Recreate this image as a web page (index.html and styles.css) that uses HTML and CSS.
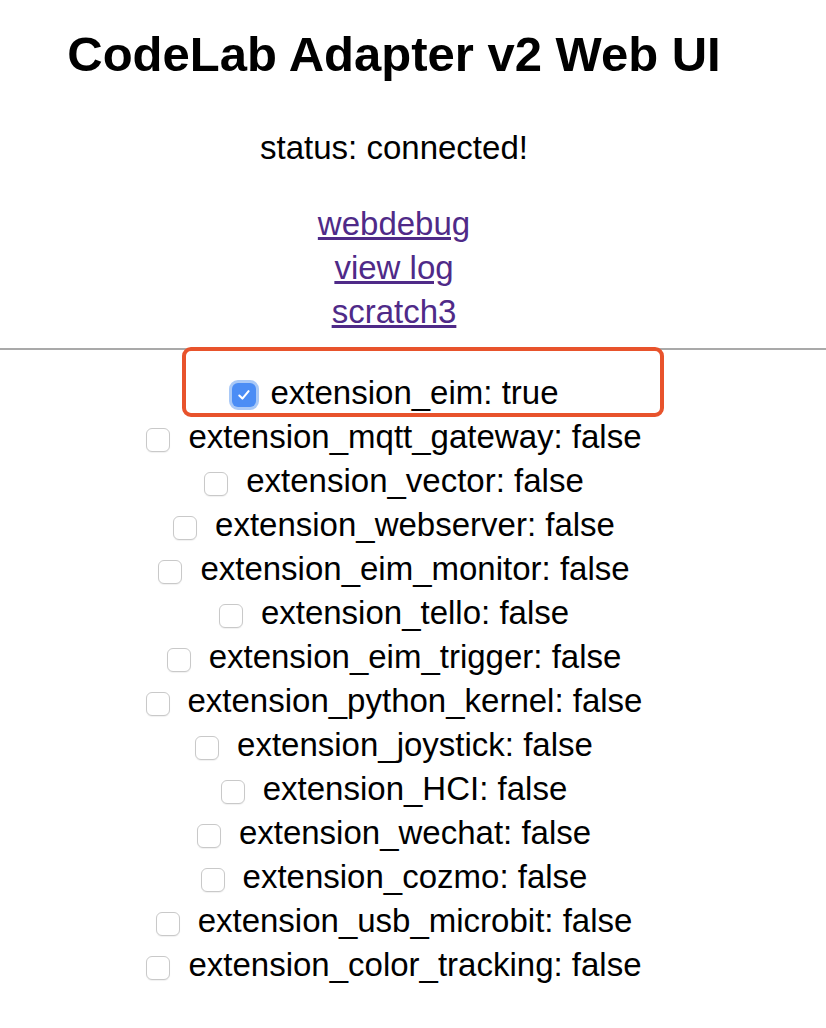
FILE: index.html
```html
<!DOCTYPE html>
<html>
<head>
<meta charset="utf-8">
<link rel="stylesheet" href="styles.css">
</head>
<body>
<div class="col">
  <h1 class="title">CodeLab Adapter v2 Web UI</h1>
  <p class="status">status: connected!</p>
  <div class="links">
    <a href="#">webdebug</a>
    <a href="#">view log</a>
    <a href="#">scratch3</a>
  </div>
</div>
<hr class="rule">
<div class="col list">
  <div class="row hl"><span class="box on"><svg viewBox="0 0 24 24" width="24" height="24"><path d="M7.3 12.6 L10.4 15.6 L16.6 8.2" fill="none" stroke="#fff" stroke-width="2.1" stroke-linecap="round" stroke-linejoin="round"/></svg></span>extension_eim: true<span class="mark"></span></div>
  <div class="row"><span class="box"></span>extension_mqtt_gateway: false</div>
  <div class="row"><span class="box"></span>extension_vector: false</div>
  <div class="row"><span class="box"></span>extension_webserver: false</div>
  <div class="row"><span class="box"></span>extension_eim_monitor: false</div>
  <div class="row"><span class="box"></span>extension_tello: false</div>
  <div class="row"><span class="box"></span>extension_eim_trigger: false</div>
  <div class="row"><span class="box"></span>extension_python_kernel: false</div>
  <div class="row"><span class="box"></span>extension_joystick: false</div>
  <div class="row"><span class="box"></span>extension_HCI: false</div>
  <div class="row"><span class="box"></span>extension_wechat: false</div>
  <div class="row"><span class="box"></span>extension_cozmo: false</div>
  <div class="row"><span class="box"></span>extension_usb_microbit: false</div>
  <div class="row"><span class="box"></span>extension_color_tracking: false</div>
</div>
</body>
</html>
```
FILE: styles.css
```css
html, body {
  margin: 0;
  background: #fff;
}
body {
  font-family: "Liberation Sans", Arial, sans-serif;
  color: #000;
}
.col {
  width: 788px;
  text-align: center;
}
.title {
  margin: 0;
  padding-top: 26px;
  font-size: 49px;
  line-height: 56px;
  font-weight: bold;
}
.status {
  margin: 44px 0 0;
  font-size: 33px;
  line-height: 44px;
}
.links {
  margin-top: 32px;
  display: flex;
  flex-direction: column;
  align-items: center;
  font-size: 33px;
  line-height: 44px;
}
.links a {
  color: #4f2a88;
}
.rule {
  margin: 14px 0 0;
  border: 0;
  border-top: 2px solid #a9a9a9;
  height: 0;
}
.list {
  padding-top: 21px;
  font-size: 33px;
  line-height: 44px;
}
.row {
  display: flex;
  justify-content: center;
  align-items: center;
  height: 44px;
}
.hl {
  position: relative;
}
.box {
  width: 22px;
  height: 22px;
  border: 1px solid #c9c9c9;
  border-radius: 6px;
  margin-right: 18px;
  margin-top: 5px;
  background: #fff;
  box-shadow: 0 1px 1px rgba(0, 0, 0, 0.06);
  box-sizing: content-box;
  display: inline-flex;
  flex: none;
}
.box.on {
  width: 24px;
  height: 24px;
  border: 0;
  background: #4b8df5;
  box-shadow: 0 0 0 3px #a9c9f7;
  margin-right: 15px;
  margin-left: 2px;
  margin-top: 4px;
}
.mark {
  position: absolute;
  left: 182px;
  top: -24px;
  width: 482px;
  height: 70px;
  box-sizing: border-box;
  border: 4px solid #e8532c;
  border-radius: 9px;
}
```
